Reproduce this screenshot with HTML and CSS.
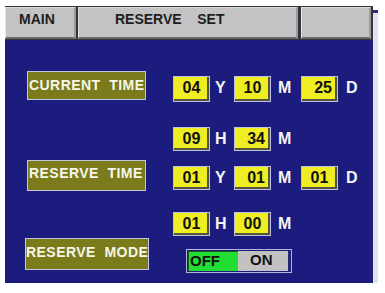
FILE: index.html
```html
<!DOCTYPE html>
<html>
<head>
<meta charset="utf-8">
<link rel="stylesheet" href="styles.css">
</head>
<body>
<div class="screen">
  <div class="panel">
    <div class="header">
      <div class="btn main">MAIN</div>
      <div class="btn title">RESERVE&nbsp;&nbsp;&nbsp;&nbsp;SET</div>
      <div class="btn blank"></div>
    </div>

    <div class="row r1">
      <div class="cell-label"><div class="label">CURRENT&nbsp;&nbsp;TIME</div></div>
      <div class="fields">
        <span class="box">04</span><span class="unit u1">Y</span>
        <span class="box">10</span><span class="unit u2">M</span>
        <span class="box right">25</span><span class="unit u3">D</span>
      </div>
    </div>

    <div class="row r2">
      <div class="cell-label"></div>
      <div class="fields">
        <span class="box">09</span><span class="unit u1">H</span>
        <span class="box right">34</span><span class="unit u2">M</span>
      </div>
    </div>

    <div class="row r3">
      <div class="cell-label"><div class="label">RESERVE&nbsp;&nbsp;TIME</div></div>
      <div class="fields">
        <span class="box">01</span><span class="unit u1">Y</span>
        <span class="box right">01</span><span class="unit u2">M</span>
        <span class="box">01</span><span class="unit u3">D</span>
      </div>
    </div>

    <div class="row r4">
      <div class="cell-label"></div>
      <div class="fields">
        <span class="box">01</span><span class="unit u1">H</span>
        <span class="box">00</span><span class="unit u2">M</span>
      </div>
    </div>

    <div class="row r5">
      <div class="cell-label"><div class="label mode">RESERVE&nbsp;&nbsp;MODE</div></div>
      <div class="fields">
        <div class="toggle">
          <span class="off">OFF</span><span class="on">ON</span>
        </div>
      </div>
    </div>
  </div>
  <div class="edge"></div>
</div>
</body>
</html>
```

FILE: styles.css
```css
html, body {
  margin: 0;
  padding: 0;
  background: #ffffff;
}

body {
  font-family: "Liberation Sans", Arial, sans-serif;
}

.screen {
  display: flex;
  align-items: flex-start;
  padding: 6px 0 0 5px;
}

.panel {
  width: 368px;
  height: 277px;
  background: #1c1c7e;
  display: flex;
  flex-direction: column;
}

.edge {
  width: 5px;
  height: 270px;
  margin-top: 4px;
  background: #e2e2ee;
  border-top: 3px solid #2a2a80;
}

/* header */
.header {
  display: flex;
  background: #34343e;
  padding: 1px 0 1px 0;
}

.btn {
  height: 32px;
  box-sizing: border-box;
  background: #c3c3c3;
  border-top: 1px solid #dcdcdc;
  border-left: 1px solid #e6e6e6;
  border-right: 2px solid #9a9a9a;
  border-bottom: 2px solid #6a6a6a;
  color: #1e1e1e;
  font-weight: bold;
  font-size: 14px;
  line-height: 22px;
}

.main {
  width: 71px;
  padding-left: 13px;
}

.title {
  width: 220px;
  margin-left: 2px;
  padding-left: 36px;
}

.blank {
  width: 70px;
  margin-left: 3px;
}

/* rows */
.row {
  display: flex;
  padding-left: 22px;
}

.cell-label {
  width: 146px;
  flex: none;
}

.fields {
  display: flex;
  align-items: stretch;
}

.r1 { margin-top: 31px; height: 31px; }
.r2 { margin-top: 25px; height: 24px; }
.r3 { margin-top: 9px; height: 31px; }
.r4 { margin-top: 21px; height: 24px; }
.r5 { margin-top: 2px; height: 35px; }

.r1 .fields { margin-top: 5px; height: 26px; }
.r2 .fields { height: 24px; }
.r3 .fields { margin-top: 6px; height: 24px; }
.r4 .fields { height: 24px; }
.r5 .fields { margin-top: 11px; margin-left: 13px; height: 24px; }

.label {
  width: 119px;
  height: 29px;
  box-sizing: border-box;
  background: #7b7b1c;
  border: 1px solid #c4c4e4;
  color: #f6f6ea;
  font-size: 14px;
  font-weight: bold;
  line-height: 26px;
  padding-left: 1px;
  white-space: nowrap;
  letter-spacing: 0.45px;
}

.r3 .label {
  height: 31px;
  line-height: 25px;
}

.label.mode {
  width: 124px;
  height: 32px;
  margin-left: -2px;
  line-height: 26px;
  padding-left: 0;
}

.box {
  width: 37px;
  box-sizing: border-box;
  background: #eeee22;
  border: 1px solid #c0c0e4;
  box-shadow: inset -2px -2px 0 #55553a;
  color: #111111;
  font-weight: bold;
  font-size: 16px;
  line-height: 18px;
  text-align: center;
  padding-top: 2px;
}

.box.right {
  text-align: right;
  padding-right: 5px;
}

.unit {
  color: #f4f4f4;
  font-size: 16px;
  font-weight: bold;
  line-height: 20px;
  padding-top: 2px;
}

.u1 { width: 24px; box-sizing: border-box; padding-left: 5px; }
.u2 { width: 30px; box-sizing: border-box; padding-left: 7px; }
.u3 { width: 30px; box-sizing: border-box; padding-left: 8px; }

/* toggle */
.toggle {
  display: flex;
  width: 106px;
  height: 24px;
  box-sizing: border-box;
  border: 1px solid #b4b4dc;
  padding: 1px;
}

.toggle span {
  font-size: 15px;
  font-weight: bold;
  color: #111111;
  line-height: 18px;
}

.off {
  width: 50px;
  box-sizing: border-box;
  background: #22dd33;
  border-top: 1px solid #1a5a1a;
  border-left: 1px solid #1a5a1a;
  padding-left: 1px;
}

.on {
  flex: 1;
  box-sizing: border-box;
  background: #c2c2c2;
  border-right: 2px solid #2a2a60;
  padding-left: 12px;
}
```
